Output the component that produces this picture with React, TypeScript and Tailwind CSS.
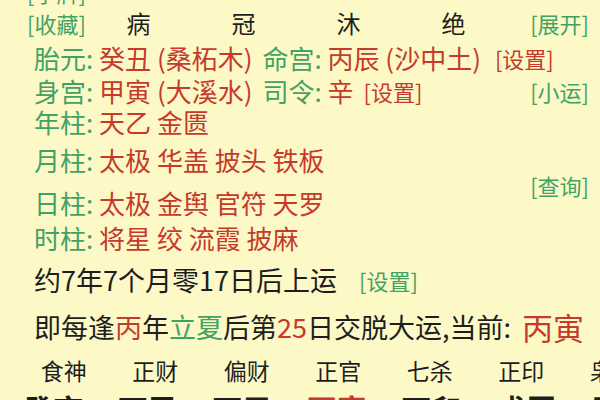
import React from "react";

const G = "text-[#42a266]";
const R = "text-[#c63a2e]";

export default function App() {
  return (
    <div
      className="w-[600px] h-[400px] overflow-hidden bg-[#fcf9c7] text-[#1e1e1e]"
      style={{ fontFamily: '"Noto Sans CJK SC", "Noto Sans", sans-serif' }}
    >
      <div className="flex flex-col -mt-[21px]">
        {/* row 0 */}
        <div className={`h-[28px] leading-[26px] text-[22px] pl-[27px] ${G}`}>[字牌]</div>
        {/* row 1 */}
        <div className="h-[32px] flex items-center text-[22px] leading-[26px]">
          <span className={`pl-[27px] w-[86px] ${G}`}>[收藏]</span>
          <span className="w-[105px] text-center text-[24px]">病</span>
          <span className="w-[105px] text-center text-[24px]">冠</span>
          <span className="w-[105px] text-center text-[24px]">沐</span>
          <span className="w-[105px] text-center text-[24px]">绝</span>
          <span className={`ml-auto pr-[11px] ${G}`}>[展开]</span>
        </div>
        {/* row 2 */}
        <div className="h-[38px] flex items-center text-[26px] leading-[26px] pl-[34px] whitespace-pre">
          <span className={G}>胎元: </span>
          <span className={R}>癸丑 (桑柘木)</span>
          <span className={`${G} ml-[10px]`}>命宫: </span>
          <span className={R}>丙辰 (沙中土)</span>
          <span className={`${R} text-[22px] ml-[14px]`}>[设置]</span>
        </div>
        {/* row 3 */}
        <div className="h-[28px] flex items-center text-[26px] leading-[26px] pl-[34px] whitespace-pre">
          <span className={G}>身宫: </span>
          <span className={R}>甲寅 (大溪水)</span>
          <span className={`${G} ml-[10px]`}>司令: </span>
          <span className={R}>辛</span>
          <span className={`${R} text-[22px] ml-[10px]`}>[设置]</span>
          <span className={`${G} text-[22px] ml-auto pr-[11px]`}>[小运]</span>
        </div>
        {/* row 4 */}
        <div className="h-[34px] flex items-center text-[26px] leading-[26px] pl-[34px] whitespace-pre">
          <span className={G}>年柱: </span>
          <span className={R}>天乙 金匮</span>
        </div>
        {/* rows 5-6 */}
        <div className="flex items-center">
          <div className="flex flex-col gap-[1px] text-[26px] leading-[26px] pl-[34px] whitespace-pre">
            <div className="h-[42px] flex items-center">
              <span className={G}>月柱: </span>
              <span className={R}>太极 华盖 披头 铁板</span>
            </div>
            <div className="h-[42px] flex items-center">
              <span className={G}>日柱: </span>
              <span className={R}>太极 金舆 官符 天罗</span>
            </div>
          </div>
          <span className={`${G} text-[22px] leading-[26px] ml-auto pr-[11px] mt-[6px]`}>[查询]</span>
        </div>
        {/* row 7 */}
        <div className="h-[28px] flex items-center text-[26px] leading-[26px] pl-[34px] whitespace-pre">
          <span className={G}>时柱: </span>
          <span className={R}>将星 绞 流霞 披麻</span>
        </div>
        {/* row 8 */}
        <div className="h-[56px] flex items-center text-[27px] leading-[30px] pl-[34px]">
          <span>约7年7个月零17日后上运</span>
          <span className={`${G} text-[22px] ml-[22px]`}>[设置]</span>
        </div>
        {/* row 9 */}
        <div className="h-[38px] flex items-center text-[27px] leading-[30px] pl-[34px] whitespace-pre">
          <span>即每逢</span>
          <span className={R}>丙</span>
          <span>年</span>
          <span className={G}>立夏</span>
          <span>后第</span>
          <span className={R}>25</span>
          <span>日交脱大运,当前: </span>
          <span className={`${R} text-[31px] ml-[5px]`}>丙寅</span>
        </div>
        {/* row 10 */}
        <div className="h-[47px] grid grid-cols-[repeat(7,91.5px)] pl-[18px] items-center text-[23px] leading-[26px]">
          <span className="text-center">食神</span>
          <span className="text-center">正财</span>
          <span className="text-center">偏财</span>
          <span className="text-center">正官</span>
          <span className="text-center">七杀</span>
          <span className="text-center">正印</span>
          <span className="text-center">枭神</span>
        </div>
        {/* row 11 */}
        <div className="h-[40px] grid grid-cols-[repeat(7,94.5px)] pl-[6px] items-start text-[30px] font-bold leading-[30px]">
          <span className="text-center">癸亥</span>
          <span className="text-center">丁丑</span>
          <span className="text-center">丁巳</span>
          <span className={`text-center ${R}`}>丙寅</span>
          <span className="text-center">丁卯</span>
          <span className="text-center">戊辰</span>
          <span className="text-center">己巳</span>
        </div>
      </div>
    </div>
  );
}
